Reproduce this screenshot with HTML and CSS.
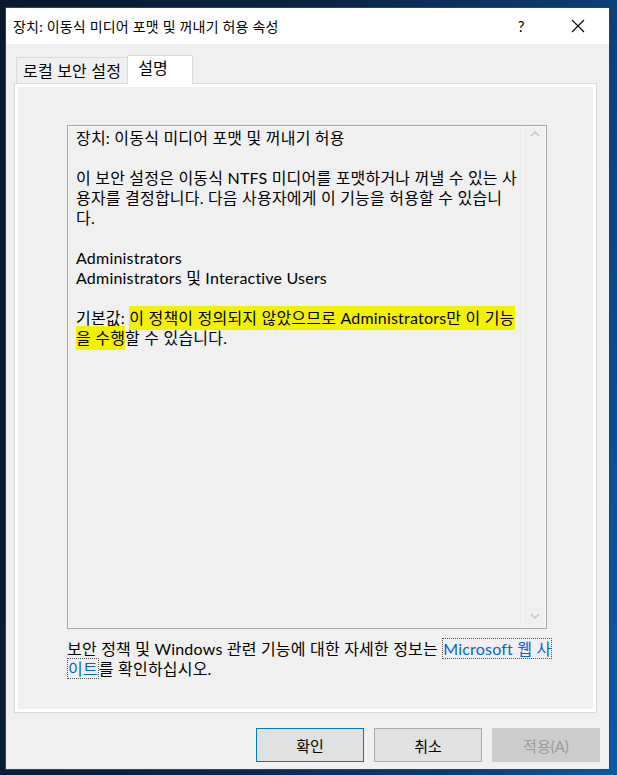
FILE: index.html
```html
<!DOCTYPE html>
<html>

<head>
    <meta name="viewport" content="width=device-width, initial-scale=1">
    <link rel="stylesheet" href="styles.css">
</head>

<body>

    <div class="window">
        <div class="titlebar">
            <span class="title">장치: 이동식 미디어 포맷 및 꺼내기 허용 속성</span>
            <span class="help">?</span>
            <span class="close">
                <svg width="14" height="14" viewBox="0 0 14 14">
                    <path d="M1 1 L13 13 M13 1 L1 13" stroke="#000" stroke-width="1.1" fill="none" />
                </svg>
            </span>
        </div>

        <div class="content">
            <div class="tabs">
                <div class="tab">로컬 보안 설정</div>
                <div class="tab active">설명</div>
            </div>

            <div class="panel">
                <div class="descbox">
                    <div class="desctext">
                        장치: 이동식 미디어 포맷 및 꺼내기 허용<br>
                        <br>
                        이 보안 설정은 이동식 NTFS 미디어를 포맷하거나 꺼낼 수 있는 사<br>
                        용자를 결정합니다. 다음 사용자에게 이 기능을 허용할 수 있습니<br>
                        다.<br>
                        <br>
                        Administrators<br>
                        Administrators 및 Interactive Users<br>
                        <br>
                        기본값: <mark class="marker">이 정책이 정의되지 않았으므로 Administrators만 이 기능<br>을 수행</mark>할 수 있습니다.
                    </div>
                    <div class="scrollbar">
                        <svg width="10" height="6" viewBox="0 0 10 6">
                            <path d="M1 5 L5 1 L9 5" stroke="#c4c4c4" stroke-width="1.5" fill="none" />
                        </svg>
                        <svg width="10" height="6" viewBox="0 0 10 6">
                            <path d="M1 1 L5 5 L9 1" stroke="#c4c4c4" stroke-width="1.5" fill="none" />
                        </svg>
                    </div>
                </div>

                <p class="moreinfo">
                    보안 정책 및 Windows 관련 기능에 대한 자세한 정보는 <a class="link" href="#">Microsoft 웹 사<br>이트</a>를 확인하십시오.
                </p>
            </div>

            <div class="buttons">
                <button class="btn default">확인</button>
                <button class="btn">취소</button>
                <button class="btn" disabled>적용(A)</button>
            </div>
        </div>
    </div>

</body>

</html>
```

FILE: styles.css
```css
body {
    margin: 0;
    width: 617px;
    height: 775px;
    overflow: hidden;
    font-family: Lato, "Noto Sans CJK KR", sans-serif;
    background: linear-gradient(100deg, #08182f 0%, #0a2548 45%, #0c3d75 80%, #0d5aa6 100%);
}

/* Dialog window */
.window {
    box-sizing: border-box;
    margin: 7px 0 0 5px;
    width: 605px;
    height: 763px;
    border: 1px solid #25476e;
    background-color: #f0f0f0;
    display: flex;
    flex-direction: column;
}

.titlebar {
    height: 36px;
    background-color: #ffffff;
    display: flex;
    align-items: center;
    padding-left: 7px;
}

.title {
    font-size: 14px;
    letter-spacing: 0.2px;
    color: #000;
    flex: 1;
}

.help {
    font-size: 15px;
    width: 56px;
    text-align: center;
    margin-right: 6px;
}

.close {
    width: 46px;
    display: flex;
    justify-content: center;
    margin-right: 8px;
}

/* Tabs */
.content {
    flex: 1;
    display: flex;
    flex-direction: column;
    font-size: 16px;
    letter-spacing: 0.2px;
    color: #000;
}

.tabs {
    display: flex;
    align-items: flex-end;
    margin: 11px 0 0 10px;
    height: 28px;
}

.tab {
    box-sizing: border-box;
    height: 26px;
    padding: 0 6px;
    border: 1px solid #d9d9d9;
    border-bottom: none;
    line-height: 25px;
}

.tab.active {
    height: 29px;
    width: 66px;
    padding: 0 10px;
    margin-left: -1px;
    margin-bottom: -1px;
    background-color: #ffffff;
    line-height: 24px;
    position: relative;
}

/* Tab page */
.panel {
    box-sizing: border-box;
    margin-left: 8px;
    width: 583px;
    height: 630px;
    border: 1px solid #d9d9d9;
    box-shadow: inset 0 0 0 3px #ffffff;
    padding: 41px 0 0 52px;
}

.descbox {
    box-sizing: border-box;
    width: 480px;
    height: 504px;
    border: 1px solid #a5a5a5;
    box-shadow: inset 0 0 0 1px #fafafa;
    display: flex;
}

.desctext {
    flex: 1;
    padding: 2px 0 0 8px;
    line-height: 20px;
    white-space: nowrap;
}

.marker {
    background-color: #f2f200;
    color: #000;
    padding: 2px 0 3px;
}

.scrollbar {
    width: 22px;
    border-left: 1px solid #fafafa;
    display: flex;
    flex-direction: column;
    justify-content: space-between;
    align-items: center;
    padding: 5px 0 9px;
}

.moreinfo {
    margin: 10px 0 0;
    width: 482px;
    line-height: 20px;
    white-space: nowrap;
}

.link {
    color: #0066cc;
    text-decoration: none;
    border: 1px dotted #555;
    -webkit-box-decoration-break: clone;
    box-decoration-break: clone;
}

/* Button row */
.buttons {
    display: flex;
    justify-content: flex-end;
    gap: 10px;
    margin: 15px 9px 0 0;
}

.btn {
    width: 108px;
    height: 34px;
    font-family: inherit;
    font-size: 15px;
    color: #000;
    background-color: #e1e1e1;
    border: 1px solid #adadad;
}

.btn.default {
    border-color: #0078d7;
}

.btn:disabled {
    background-color: #cccccc;
    border-color: #cccccc;
    color: #9a9a9a;
}
```
